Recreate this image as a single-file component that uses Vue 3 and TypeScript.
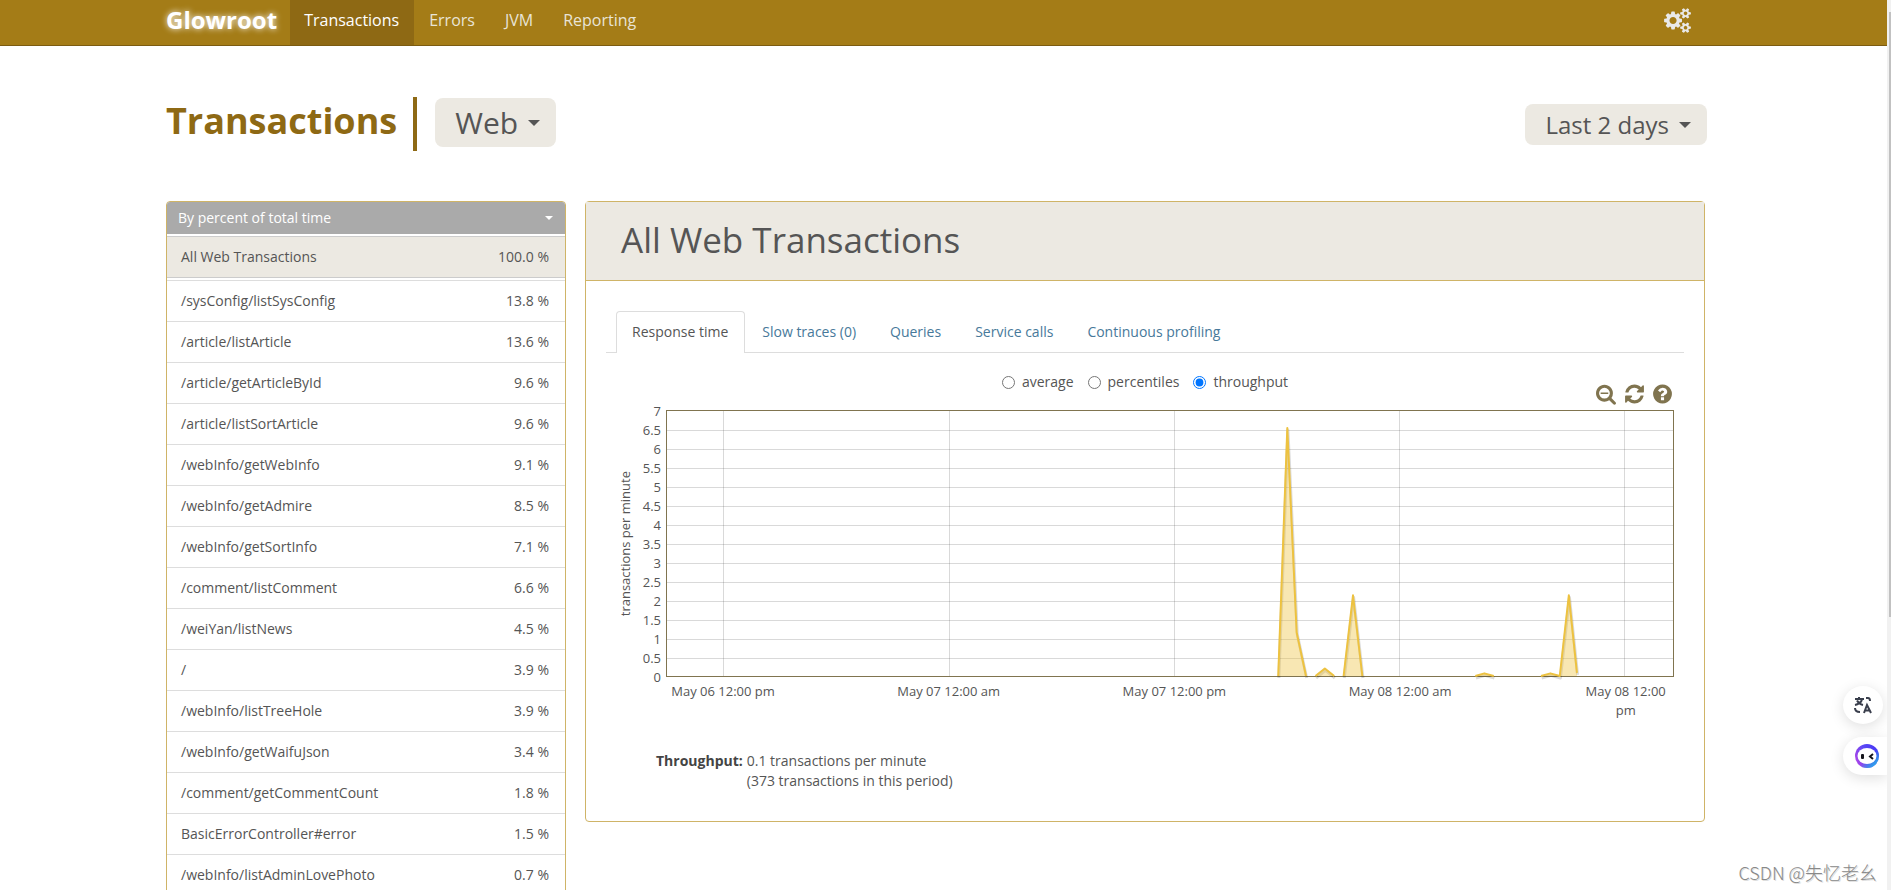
<script setup lang="ts">
import { ref } from 'vue'

interface Transaction {
  name: string
  percent: string
}

const navItems: string[] = ['Transactions', 'Errors', 'JVM', 'Reporting']
const tabs: string[] = ['Response time', 'Slow traces (0)', 'Queries', 'Service calls', 'Continuous profiling']
const metrics: string[] = ['average', 'percentiles', 'throughput']
const metric = ref<string>('throughput')

const transactions: Transaction[] = [
  { name: '/sysConfig/listSysConfig', percent: '13.8' },
  { name: '/article/listArticle', percent: '13.6' },
  { name: '/article/getArticleById', percent: '9.6' },
  { name: '/article/listSortArticle', percent: '9.6' },
  { name: '/webInfo/getWebInfo', percent: '9.1' },
  { name: '/webInfo/getAdmire', percent: '8.5' },
  { name: '/webInfo/getSortInfo', percent: '7.1' },
  { name: '/comment/listComment', percent: '6.6' },
  { name: '/weiYan/listNews', percent: '4.5' },
  { name: '/', percent: '3.9' },
  { name: '/webInfo/listTreeHole', percent: '3.9' },
  { name: '/webInfo/getWaifuJson', percent: '3.4' },
  { name: '/comment/getCommentCount', percent: '1.8' },
  { name: 'BasicErrorController#error', percent: '1.5' },
  { name: '/webInfo/listAdminLovePhoto', percent: '0.7' },
]

const yTicks: number[] = Array.from({ length: 15 }, (_, i) => 7 - i * 0.5)
const yLines: number[] = yTicks.slice(1, -1)

// Minutes since the left edge of the plot; the visible range is 3216 minutes.
const RANGE = 3216
const xTicks = [
  { at: 182, label: 'May 06 12:00 pm' },
  { at: 902, label: 'May 07 12:00 am' },
  { at: 1622, label: 'May 07 12:00 pm' },
  { at: 2342, label: 'May 08 12:00 am' },
  { at: 3062, label: 'May 08 12:00 pm' },
]
const xPercent = (minutes: number): string => `${(minutes / RANGE) * 100}%`

const series: [number, number][][] = [
  [[1954, 0], [1983, 6.55], [2013, 1.15], [2043, 0]],
  [[2073, 0], [2103, 0.2], [2133, 0]],
  [[2163, 0], [2193, 2.13], [2223, 0]],
  [[2584, 0], [2613, 0.07], [2643, 0]],
  [[2794, 0], [2824, 0.07], [2854, 0], [2883, 2.13], [2909, 0.08]],
]
const points = (part: [number, number][]): string =>
  part.map(([x, y]) => `${x},${(7 - y) * 38}`).join(' ')
const area = (part: [number, number][]): string =>
  `${part[0][0]},266 ${points(part)} ${part[part.length - 1][0]},266`
</script>

<template>
  <div class="page">
    <header class="navbar">
      <a class="brand" href="#">Glowroot</a>
      <nav class="nav">
        <a v-for="(item, i) in navItems" :key="item" href="#" :class="{ active: i === 0 }">{{ item }}</a>
      </nav>
      <a class="settings" href="#" aria-label="Configuration">
        <svg viewBox="0 0 1920 1792" aria-hidden="true">
          <path d="M896 896q0-106-75-181t-181-75-181 75-75 181 75 181 181 75 181-75 75-181zm768 512q0-52-38-90t-90-38-90 38-38 90q0 53 37.5 90.5t90.5 37.5 90.5-37.5 37.5-90.5zm0-1024q0-52-38-90t-90-38-90 38-38 90q0 53 37.5 90.5t90.5 37.5 90.5-37.5 37.5-90.5zm-384 421v185q0 10-7 19.5t-16 10.5l-155 24q-11 35-32 76 34 48 90 115 7 11 7 20 0 12-7 19-23 30-82.5 89.5t-78.5 59.5q-11 0-21-7l-115-90q-37 19-77 31-11 108-23 155-7 24-30 24h-186q-11 0-20-7.5t-10-17.5l-23-153q-34-10-75-31l-118 89q-7 7-20 7-11 0-21-8-144-133-144-160 0-9 7-19 10-14 41-53t47-61q-23-44-35-82l-152-24q-10-1-17-9.5t-7-19.5v-185q0-10 7-19.5t16-10.5l155-24q11-35 32-76-34-48-90-115-7-11-7-20 0-12 7-20 22-30 82-89t79-59q11 0 21 7l115 90q34-18 77-32 11-108 23-154 7-24 30-24h186q11 0 20 7.5t10 17.5l23 153q34 10 75 31l118-89q8-7 20-7 11 0 21 8 144 133 144 160 0 8-7 19-12 16-42 54t-45 60q23 48 34 82l152 23q10 2 17 10.5t7 19.5zm640 533v140q0 16-149 31-12 27-30 52 51 113 51 138 0 4-4 7-122 71-124 71-8 0-46-47t-52-68q-20 2-30 2t-30-2q-14 21-52 68t-46 47q-2 0-124-71-4-3-4-7 0-25 51-138-18-25-30-52-149-15-149-31v-140q0-16 149-31 13-29 30-52-51-113-51-138 0-4 4-7 4-2 35-20t59-34 30-16q8 0 46 46.5t52 67.5q20-2 30-2t30 2q51-71 92-112l6-2q4 0 124 70 4 3 4 7 0 25-51 138 17 23 30 52 149 15 149 31zm0-1024v140q0 16-149 31-12 27-30 52 51 113 51 138 0 4-4 7-122 71-124 71-8 0-46-47t-52-68q-20 2-30 2t-30-2q-14 21-52 68t-46 47q-2 0-124-71-4-3-4-7 0-25 51-138-18-25-30-52-149-15-149-31v-140q0-16 149-31 13-29 30-52-51-113-51-138 0-4 4-7 4-2 35-20t59-34 30-16q8 0 46 46.5t52 67.5q20-2 30-2t30 2q51-71 92-112l6-2q4 0 124 70 4 3 4 7 0 25-51 138 17 23 30 52 149 15 149 31z" />
        </svg>
      </a>
    </header>

    <div class="heading">
      <h1>Transactions</h1>
      <button type="button" class="pick pick-type">Web<span class="caret"></span></button>
      <button type="button" class="pick pick-range">Last 2 days<span class="caret"></span></button>
    </div>

    <main class="columns">
      <aside class="sidebar">
        <button type="button" class="sort">By percent of total time<span class="caret"></span></button>
        <a class="row total" href="#"><span>All Web Transactions</span><span>100.0 %</span></a>
        <a v-for="t in transactions" :key="t.name" class="row" href="#">
          <span>{{ t.name }}</span><span>{{ t.percent }} %</span>
        </a>
      </aside>

      <section class="panel">
        <h2>All Web Transactions</h2>
        <div class="body">
          <nav class="tabs">
            <a v-for="(tab, i) in tabs" :key="tab" href="#" :class="{ active: i === 0 }">{{ tab }}</a>
          </nav>

          <div class="metrics">
            <label v-for="m in metrics" :key="m">
              <input v-model="metric" type="radio" name="metric" :value="m" />{{ m }}
            </label>
          </div>

          <div class="tools">
            <button type="button" aria-label="Zoom out">
              <svg viewBox="64 0 1664 1792" class="wide" aria-hidden="true"><path d="M1088 800v64q0 13-9.5 22.5t-22.5 9.5h-576q-13 0-22.5-9.5t-9.5-22.5v-64q0-13 9.5-22.5t22.5-9.5h576q13 0 22.5 9.5t9.5 22.5zm128 32q0-185-131.5-316.5t-316.5-131.5-316.5 131.5-131.5 316.5 131.5 316.5 316.5 131.5 316.5-131.5 131.5-316.5zm512 832q0 53-37.5 90.5t-90.5 37.5q-54 0-90-38l-343-342q-179 124-399 124-143 0-273.5-55.5t-225-150-150-225-55.5-273.5 55.5-273.5 150-225 225-150 273.5-55.5 273.5 55.5 225 150 150 225 55.5 273.5q0 220-124 399l343 343q37 37 37 90z" /></svg>
            </button>
            <button type="button" aria-label="Refresh">
              <svg viewBox="128 0 1536 1792" aria-hidden="true"><path d="M1639 1056q0 5-1 7-64 268-268 434.5t-478 166.5q-146 0-282.5-55t-243.5-157l-129 129q-19 19-45 19t-45-19-19-45v-448q0-26 19-45t45-19h448q26 0 45 19t19 45-19 45l-137 137q71 66 161 102t187 36q134 0 250-65t186-179q11-17 53-117 8-23 30-23h192q13 0 22.5 9.5t9.5 22.5zm25-800v448q0 26-19 45t-45 19h-448q-26 0-45-19t-19-45 19-45l138-138q-148-137-349-137-134 0-250 65t-186 179q-11 17-53 117-8 23-30 23h-199q-13 0-22.5-9.5t-9.5-22.5v-7q65-268 270-434.5t480-166.5q146 0 284 55.5t245 156.5l130-129q19-19 45-19t45 19 19 45z" /></svg>
            </button>
            <button type="button" aria-label="Help">
              <svg viewBox="128 0 1536 1792" aria-hidden="true"><path d="M1024 1376v-192q0-14-9-23t-23-9h-192q-14 0-23 9t-9 23v192q0 14 9 23t23 9h192q14 0 23-9t9-23zm256-672q0-88-55.5-163t-138.5-116-170-41q-243 0-371 213-15 24 8 42l132 100q7 6 19 6 16 0 25-12 53-68 86-92 34-24 86-24 48 0 85.5 26t37.5 59q0 38-20 61t-68 45q-63 28-115.5 86.5t-52.5 125.5v36q0 14 9 23t23 9h192q14 0 23-9t9-23q0-19 21.5-49.5t54.5-49.5q32-18 49-28.5t46-35 44.5-48 28-60.5 12.5-81zm384 192q0 209-103 385.5t-279.5 279.5-385.5 103-385.5-103-279.5-279.5-103-385.5 103-385.5 279.5-279.5 385.5-103 385.5 103 279.5 279.5 103 385.5z" /></svg>
            </button>
          </div>

          <div class="chart">
            <div class="y-title"><span>transactions per minute</span></div>
            <div class="y-axis"><span v-for="y in yTicks" :key="y">{{ y }}</span></div>
            <div class="plot">
              <svg class="canvas" aria-hidden="true">
                <g class="grid">
                  <line v-for="y in yLines" :key="y" x1="0" x2="100%" :y1="(7 - y) * 38" :y2="(7 - y) * 38" />
                  <line v-for="t in xTicks" :key="t.at" :x1="xPercent(t.at)" :x2="xPercent(t.at)" y1="0" y2="100%" />
                </g>
                <svg viewBox="0 0 3216 266" preserveAspectRatio="none" width="100%" height="100%" class="series">
                  <g v-for="(part, i) in series" :key="i">
                    <polyline class="shade" :points="points(part)" />
                    <polygon class="area" :points="area(part)" />
                    <polyline class="line" :points="points(part)" />
                  </g>
                </svg>
              </svg>
            </div>
            <div class="x-axis">
              <span v-for="t in xTicks" :key="t.at" :class="{ narrow: t.at > 3000 }" :style="{ left: xPercent(t.at) }">{{ t.label }}</span>
            </div>
          </div>

          <dl class="summary">
            <dt>Throughput:</dt>
            <dd>0.1 transactions per minute<br />(373 transactions in this period)</dd>
          </dl>
        </div>
      </section>
    </main>

    <button type="button" class="float translate" aria-label="Translate">
      <svg viewBox="0 0 18 18" aria-hidden="true">
        <g fill="none" stroke="#3a3f4d" stroke-width="2">
          <path d="M1 3h9M5 1v2M8 4Q6 8 1 9M3 4.5Q5 8 9 9M12 2h2q2 0 2 3M1 12q0 4 5 4" />
          <path d="M10 17l3-8 4 8M11 14.5h5" />
        </g>
      </svg>
    </button>
    <button type="button" class="float assistant" aria-label="Assistant">
      <svg viewBox="0 0 24 24" aria-hidden="true">
        <defs>
          <linearGradient id="ring" x1="0" y1="0.7" x2="1" y2="0.3">
            <stop offset="0" stop-color="#b044e8" />
            <stop offset="0.5" stop-color="#5a48f5" />
            <stop offset="1" stop-color="#4636f5" />
          </linearGradient>
          <linearGradient id="glow" x1="0.3" y1="0.5" x2="0.8" y2="1">
            <stop offset="0.3" stop-color="#25b5e8" stop-opacity="0" />
            <stop offset="1" stop-color="#25b5e8" />
          </linearGradient>
        </defs>
        <circle cx="12" cy="12" r="12" fill="url(#ring)" />
        <circle cx="12" cy="12" r="12" fill="url(#glow)" />
        <ellipse cx="12" cy="12" rx="9.5" ry="8" fill="#fff" />
        <rect x="6" y="10" width="3" height="5" rx="1" fill="#15151c" />
        <path d="M18 10l-3 2.500 3 2.500" fill="none" stroke="#15151c" stroke-width="2" />
      </svg>
    </button>
    <div class="watermark">CSDN @失忆老幺</div>
    <div class="scrollbar"><div class="thumb"></div></div>
  </div>
</template>

<style>
body {
  margin: 0;
  background: #fff;
}
</style>

<style scoped>
.page {
  position: relative;
  height: 100vh;
  overflow: hidden;
  box-sizing: border-box;
  padding-right: 4px;
  font: 14px/20px "Open Sans", "Noto Sans", sans-serif;
  color: #555;
}
a {
  color: inherit;
  text-decoration: none;
}
button {
  font: inherit;
  color: inherit;
  border: 0;
  padding: 0;
  background: none;
  cursor: pointer;
}
svg {
  display: block;
}
.caret {
  border: 6px solid transparent;
  border-top-color: currentColor;
  border-bottom: 0;
}
.navbar {
  display: flex;
  align-items: stretch;
  height: 45px;
  padding: 0 196px 0 166px;
  background: #a47c17;
  border-bottom: 1px solid #7b5b11;
  font-size: 16px;
  line-height: 40px;
  color: #e9e4d6;
}
.brand {
  margin-right: 13px;
  font-size: 24px;
  font-weight: 700;
  color: #fff;
  text-shadow: 0 0 6px #fff;
}
.nav {
  display: flex;
}
.nav a {
  padding: 0 15px;
}
.nav .active {
  padding: 0 15px 0 14px;
  background: #8e6914;
  color: #fff;
}
.settings {
  margin: 8px 0 0 auto;
}
.settings svg {
  width: 27px;
  height: 25px;
  fill: #e9e9e9;
}
.heading {
  display: flex;
  align-items: baseline;
  padding: 51px 180px 50px 166px;
}
h1 {
  margin: 0;
  padding: 0 16px 6px 0;
  border-right: 4px solid #8e6914;
  font-size: 36px;
  line-height: 48px;
  font-weight: 700;
  color: #8e6914;
}
.pick {
  display: flex;
  align-items: center;
  gap: 10px;
  padding: 0 16px 0 20px;
  border-radius: 8px;
  background: #ece9e2;
  font-weight: 500;
}
.pick-type {
  margin-left: 18px;
  font-size: 30px;
  line-height: 49px;
}
.pick-range {
  margin-left: auto;
  font-size: 24px;
  line-height: 41px;
}
.columns {
  display: flex;
  align-items: flex-start;
  gap: 19px;
  padding: 0 182px 0 166px;
}
.sidebar {
  flex: 0 0 400px;
  box-sizing: border-box;
  border: 1px solid #cfb467;
  border-radius: 4px;
  overflow: hidden;
}
.sort {
  display: flex;
  align-items: center;
  justify-content: space-between;
  width: 100%;
  height: 32px;
  margin-bottom: 2px;
  padding: 0 12px 0 11px;
  background: #aaa;
  color: #fff;
}
.sort .caret {
  border-width: 4px 4px 0;
}
.row {
  display: flex;
  justify-content: space-between;
  padding: 10px 16px 10px 14px;
  border-top: 1px solid #ddd;
}
.total {
  margin-bottom: 2px;
  border-top-color: #ccc;
  border-bottom: 1px solid #ccc;
  background: #ece9e2;
}
.panel {
  flex: 1;
  min-width: 0;
  border: 1px solid #cfb467;
  border-radius: 4px;
}
h2 {
  margin: 0;
  padding: 14px 35px 16px;
  border-bottom: 1px solid #cfb467;
  background: #ece9e2;
  font-size: 35px;
  line-height: 48px;
  font-weight: 500;
}
.body {
  padding: 30px 20px;
}
.tabs {
  display: flex;
  padding: 0 10px;
  border-bottom: 1px solid #ddd;
}
.tabs a {
  padding: 10px 16px;
  border: 1px solid transparent;
  border-bottom: 0;
  color: #47799a;
}
.tabs .active {
  margin-bottom: -1px;
  padding: 10px 16px 11px 15px;
  border-color: #ddd;
  border-radius: 4px 4px 0 0;
  background: #fff;
  color: #555;
}
.metrics {
  display: flex;
  justify-content: center;
  gap: 14px;
  padding-top: 19px;
}
.metrics label {
  display: flex;
  align-items: center;
}
.metrics input {
  width: 13px;
  height: 13px;
  margin: 0 7px 0 0;
  accent-color: #0075ff;
}
.tools {
  display: flex;
  justify-content: flex-end;
  gap: 9px;
  margin: -9px 12px 5px;
}
.tools svg {
  width: 19px;
  height: 22px;
  fill: #80744f;
}
.tools .wide {
  width: 20px;
}
.chart {
  display: grid;
  grid-template-columns: 20px 31px 1fr;
  grid-template-rows: 267px auto;
  margin: 0 10px 0 9px;
  font-size: 13px;
  line-height: 19px;
}
.y-title {
  display: flex;
  align-items: center;
  justify-content: center;
}
.y-title span {
  writing-mode: vertical-rl;
  transform: rotate(180deg);
  white-space: nowrap;
}
.y-axis {
  display: flex;
  flex-direction: column;
  align-items: flex-end;
  margin-top: -8px;
  padding-right: 5px;
}
.plot {
  border: 1px solid #80744f;
  height: 265px;
}
.canvas {
  width: 100%;
  height: 265px;
  overflow: visible;
}
.series {
  overflow: visible;
}
.grid line {
  stroke: rgba(84, 84, 84, 0.22);
  shape-rendering: crispEdges;
}
.area {
  fill: rgba(237, 194, 64, 0.4);
}
.line,
.shade {
  fill: none;
  vector-effect: non-scaling-stroke;
  stroke-width: 2;
  stroke-linejoin: round;
}
.line {
  stroke: #edc240;
}
.shade {
  stroke: rgba(0, 0, 0, 0.14);
  stroke-width: 3;
  transform: translate(2px, 2px);
}
.x-axis {
  position: relative;
  grid-column: 3;
  height: 64px;
  padding-top: 5px;
  box-sizing: border-box;
}
.x-axis span {
  position: absolute;
  transform: translateX(-50%);
  white-space: nowrap;
  text-align: center;
}
.x-axis .narrow {
  width: 84px;
  white-space: normal;
}
.summary {
  display: flex;
  gap: 4px;
  margin: 10px 0 0 50px;
}
dt {
  font-weight: 700;
  color: #444;
}
dd {
  margin: 0;
}
.float {
  position: absolute;
  display: flex;
  align-items: center;
  background: #fff;
  box-shadow: 0 3px 14px rgba(0, 0, 0, 0.13);
}
.translate {
  right: 8px;
  bottom: 166px;
  width: 40px;
  height: 38px;
  padding-left: 11px;
  border-radius: 50%;
}
.translate svg {
  width: 18px;
  height: 18px;
}
.assistant {
  right: 4px;
  bottom: 115px;
  width: 44px;
  height: 38px;
  padding-left: 12px;
  border-radius: 20px 0 0 20px;
}
.assistant svg {
  width: 24px;
  height: 24px;
}
.watermark {
  position: absolute;
  right: 14px;
  bottom: 6px;
  font: 300 18px/24px "Noto Sans CJK SC", sans-serif;
  color: #888;
  text-shadow: 1px 1px 0 #ddd;
  white-space: nowrap;
}
.scrollbar {
  position: absolute;
  top: 0;
  right: 0;
  bottom: 0;
  width: 4px;
  background: #f1f1f1;
}
.thumb {
  height: 68%;
  margin: 12px 0 0 2px;
  background: #c1c1c1;
}
</style>
